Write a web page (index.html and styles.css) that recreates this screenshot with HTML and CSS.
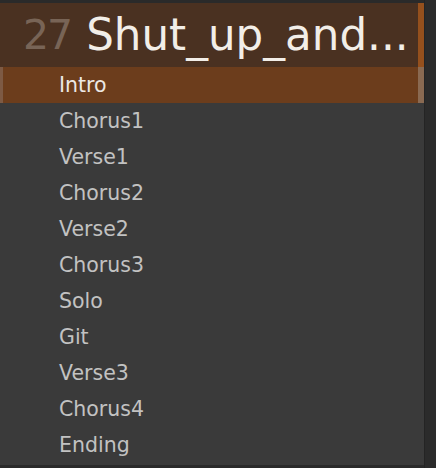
FILE: index.html
```html
<!DOCTYPE html>
<html>
<head>
<meta charset="utf-8">
<link rel="stylesheet" href="styles.css">
</head>
<body>
<div class="app">
  <div class="panel">
    <div class="header">
      <span class="num">27</span>
      <span class="title">Shut_up_and...</span>
    </div>
    <ul class="list">
      <li class="item active">Intro</li>
      <li class="item">Chorus1</li>
      <li class="item">Verse1</li>
      <li class="item">Chorus2</li>
      <li class="item">Verse2</li>
      <li class="item">Chorus3</li>
      <li class="item">Solo</li>
      <li class="item">Git</li>
      <li class="item">Verse3</li>
      <li class="item">Chorus4</li>
      <li class="item">Ending</li>
    </ul>
  </div>
  <div class="side"></div>
</div>
</body>
</html>
```
FILE: styles.css
```css
html, body {
  margin: 0;
  padding: 0;
  background: #2a2a2a;
  width: 436px;
  height: 468px;
  overflow: hidden;
  font-family: "DejaVu Sans", Verdana, sans-serif;
}
.app {
  display: flex;
  height: 468px;
}
.panel {
  width: 424px;
  padding-top: 3px;
  padding-bottom: 3px;
  display: flex;
  flex-direction: column;
}
.header {
  height: 64px;
  background: #4a3121;
  border-right: 6px solid #95501d;
  display: flex;
  align-items: center;
  padding-left: 23px;
  gap: 15px;
  box-sizing: border-box;
}
.num {
  font-size: 41px;
  color: #786456;
  letter-spacing: -2px;
}
.title {
  font-size: 43.6px;
  color: #f2eee8;
}
.list {
  list-style: none;
  margin: 0;
  padding: 0;
  background: #3a3a3a;
  flex: 1;
}
.item {
  height: 36px;
  display: flex;
  align-items: center;
  padding-left: 59px;
  font-size: 20.5px;
  color: #c2c2c2;
  box-sizing: border-box;
}
.item.active {
  background: #6c3d1c;
  color: #ece8e4;
  border-left: 3px solid #7d5a44;
  border-right: 6px solid #8a6a52;
  padding-left: 56px;
}
.side {
  flex: 1;
  background: #2b2b2b;
  border-left: 1px solid #242424;
}
```
